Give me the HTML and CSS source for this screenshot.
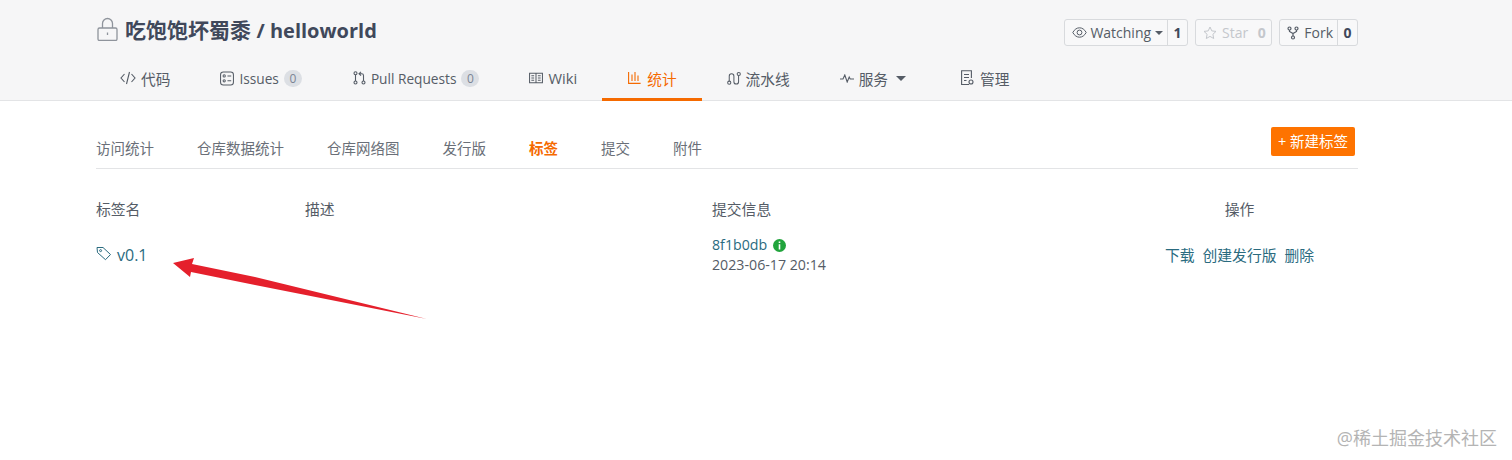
FILE: index.html
```html
<!DOCTYPE html>
<html lang="zh-CN">
<head>
    <meta charset="UTF-8">
    <meta name="viewport" content="width=device-width, initial-scale=1.0">
    <title>helloworld</title>
    <link rel="stylesheet" href="styles.css">
</head>
<body>
    <div class="header">
        <div class="container">
            <div class="title-row">
                <h1 class="repo-title">
                    <svg class="lock-icon" width="22" height="24" viewBox="0 0 22 24" fill="none" stroke="#8f949c" stroke-width="1.300">
                        <rect x="2" y="11" width="19" height="12.500" rx="1.500"/>
                        <path d="M6.500 11V6.500a5 5 0 0 1 10 0V11"/>
                        <path d="M11.500 15.500v2.500"/>
                    </svg>
                    <span>吃饱饱坏蜀黍 <span class="title-en">/ helloworld</span></span>
                </h1>
                <div class="repo-actions">
                    <div class="action-btn">
                        <span class="action-main">
                            <svg class="eye-icon" width="15" height="11" viewBox="0 0 15 11" fill="none" stroke="#555c66" stroke-width="1">
                                <path d="M.8 5.500C2.500 2.400 4.800.8 7.500.8s5 1.600 6.700 4.700c-1.700 3.100-4 4.700-6.700 4.700S2.500 8.600.8 5.500z"/>
                                <circle cx="7.500" cy="5.500" r="2.400"/>
                            </svg>
                            Watching<i class="caret"></i>
                        </span>
                        <span class="action-count">1</span>
                    </div>
                    <div class="action-btn disabled">
                        <span class="action-main">
                            <svg width="14" height="14" viewBox="0 0 14 14" fill="none" stroke="#c4c7cc" stroke-width="1">
                                <path d="M7 1l1.800 3.900 4.200.5-3.100 2.900.8 4.200L7 10.400l-3.700 2.100.8-4.200L1 5.400l4.200-.5z"/>
                            </svg>
                            Star
                        </span>
                        <span class="action-count">0</span>
                    </div>
                    <div class="action-btn">
                        <span class="action-main">
                            <svg width="12" height="14" viewBox="0 0 12 14" fill="none" stroke="#555c66" stroke-width="1.200">
                                <circle cx="2.500" cy="2.500" r="1.500"/>
                                <circle cx="9.500" cy="2.500" r="1.500"/>
                                <circle cx="6" cy="11.500" r="1.500"/>
                                <path d="M2.500 4v1.500L6 7.500l3.500-2V4M6 7.500V10"/>
                            </svg>
                            Fork
                        </span>
                        <span class="action-count">0</span>
                    </div>
                </div>
            </div>
            <div class="tabs">
                <a class="tab" href="#code">
                    <svg width="16" height="14" viewBox="0 0 16 14" fill="none" stroke="#555c66" stroke-width="1.100">
                        <path d="M4.500 3L1 7l3.500 4M11.500 3L15 7l-3.500 4M9.500 1L6.500 13"/>
                    </svg>
                    代码
                </a>
                <a class="tab" href="#issues">
                    <svg width="14" height="15" viewBox="0 0 15 15" fill="none" stroke="#555c66" stroke-width="1.100">
                        <rect x=".6" y=".6" width="13.800" height="13.800" rx="3"/>
                        <circle cx="4.500" cy="4.800" r="1.200"/>
                        <circle cx="4.500" cy="10" r="1.200"/>
                        <path d="M8 4.800h4M8 10h4"/>
                    </svg>
                    <span class="tab-en">Issues</span> <span class="tab-badge">0</span>
                </a>
                <a class="tab" href="#pulls">
                    <svg width="14" height="14" viewBox="-1 0 14 14" fill="none" stroke="#555c66" stroke-width="1.100">
                        <circle cx="2.500" cy="2.300" r="1.500"/>
                        <circle cx="2.500" cy="11.500" r="1.500"/>
                        <circle cx="10.500" cy="11.500" r="1.500"/>
                        <path d="M2.500 3.800V10M10.500 10V4.500q0-1.800-1.800-1.800H6.500M8 .8L6 2.700l2 1.900"/>
                    </svg>
                    <span class="tab-en">Pull Requests</span> <span class="tab-badge">0</span>
                </a>
                <a class="tab" href="#wiki">
                    <svg width="14" height="12" viewBox="0 0 15 12" fill="none" stroke="#555c66" stroke-width="1.100">
                        <path d="M.6 1h13.800v10H.6zM7.500 1v10M2.500 3.500h3M2.500 6h3M2.500 8.500h3M9.500 3.500h3M9.500 6h3M9.500 8.500h3"/>
                    </svg>
                    <span>Wiki</span>
                </a>
                <a class="tab active" href="#stats">
                    <svg width="15" height="12" viewBox="-1 0 15 12" fill="none" stroke="#f56a00" stroke-width="1.100">
                        <path d="M.6 0v11.400h12M4 2.500v6.500M7 0v9M10 3.500V9"/>
                    </svg>
                    统计
                </a>
                <a class="tab" href="#pipeline">
                    <svg width="14" height="15" viewBox="0 0 15 15" fill="none" stroke="#555c66" stroke-width="1.100">
                        <circle cx="2.400" cy="12" r="1.700"/>
                        <circle cx="12.600" cy="2.700" r="1.700"/>
                        <path d="M2.400 10.300V5a2.500 2.500 0 0 1 5 0v6a2.500 2.500 0 0 0 5 0V4.400"/>
                    </svg>
                    流水线
                </a>
                <a class="tab" href="#services">
                    <svg width="14" height="9" viewBox="0 0 14 9" fill="none" stroke="#555c66" stroke-width="1.100">
                        <path d="M0 5h3l1.800-4 2.400 7 2-5 1 2h4"/>
                    </svg>
                    服务<i class="caret tab-caret"></i>
                </a>
                <a class="tab" href="#manage">
                    <svg width="15" height="16" viewBox="0 0 15 16" fill="none" stroke="#555c66" stroke-width="1.100">
                        <path d="M9 14.500H1.600V.8h9.800V8M4 4.500h5M4 7.500h5M4 10.500h2.500"/>
                        <circle cx="11" cy="12" r="2"/>
                    </svg>
                    管理
                </a>
            </div>
        </div>
    </div>

    <div class="container">
        <div class="subnav">
            <div class="subnav-links">
                <a href="#visits">访问统计</a>
                <a href="#data">仓库数据统计</a>
                <a href="#network">仓库网络图</a>
                <a href="#releases">发行版</a>
                <a class="active" href="#tags">标签</a>
                <a href="#commits">提交</a>
                <a href="#attach">附件</a>
            </div>
            <a class="new-tag" href="#new">+ 新建标签</a>
        </div>

        <div class="tag-table">
            <div class="tag-head">标签名</div>
            <div class="tag-head">描述</div>
            <div class="tag-head">提交信息</div>
            <div class="tag-head center">操作</div>

            <div class="tag-name">
                <svg width="16" height="15" viewBox="0 0 16 15" fill="none" stroke="#2a6b7f" stroke-width="1" stroke-linejoin="round">
                    <path d="M1 1.500h6l7.500 7-5 5.200L1.500 6.500z"/>
                    <circle cx="4.600" cy="4.600" r="1"/>
                </svg>
                <a href="#v0.1">v0.1</a>
            </div>
            <div></div>
            <div class="tag-commit">
                <div class="commit-hash">
                    <a href="#8f1b0db">8f1b0db</a>
                    <svg width="13" height="13" viewBox="0 0 13 13">
                        <circle cx="6.500" cy="6.500" r="6.500" fill="#21a43c"/>
                        <path d="M5.700 2.500h1.600v1.600H5.700zM5.700 5.300h1.600v5.200H5.700z" fill="#fff"/>
                    </svg>
                </div>
                <div class="commit-date">2023-06-17 20:14</div>
            </div>
            <div class="tag-ops">
                <a href="#download">下载</a>
                <a href="#release">创建发行版</a>
                <a href="#delete">删除</a>
            </div>
        </div>
    </div>

    <svg class="arrow" width="270" height="70" viewBox="0 0 270 70">
        <path d="M3 13L24 8 22 14 85 27 257 69 85 35 21 22 20 27z" fill="#e5202c"/>
    </svg>

    <div class="watermark">@稀土掘金技术社区</div>
</body>
</html>
```

FILE: styles.css
```css
body {
    font-family: "Open Sans", "Noto Sans CJK SC", sans-serif;
    font-size: 14.5px;
    color: #555c66;
    background-color: #fff;
    margin: 0;
    height: 460px;
    overflow: hidden;
    position: relative;
}

a {
    color: inherit;
    text-decoration: none;
}

.container {
    width: 1262px;
    margin-left: 96px;
}

.header {
    background-color: #f6f6f7;
    border-bottom: 1px solid #e3e4e6;
    height: 101px;
    box-sizing: border-box;
}

.title-row {
    display: flex;
    justify-content: space-between;
    height: 58px;
    padding-top: 18px;
    box-sizing: border-box;
}

.repo-title {
    display: flex;
    align-items: center;
    gap: 7px;
    margin: -1px 0 0;
    height: 24px;
    font-size: 21px;
    font-weight: 700;
    color: #40485b;
}

.title-en {
    font-size: 20px;
}

.repo-actions {
    display: flex;
    gap: 7px;
    padding-top: 1px;
}

.action-btn {
    display: flex;
    height: 27px;
    box-sizing: border-box;
    border: 1px solid #d8dadd;
    border-radius: 3px;
    background-color: #f8f8f9;
    font-size: 14px;
    line-height: 25px;
}

.action-main {
    display: flex;
    align-items: center;
    gap: 5px;
    padding: 0 4px 0 7px;
}

.eye-icon {
    margin-right: -2px;
}

.action-count {
    width: 19px;
    text-align: center;
    border-left: 1px solid #d8dadd;
    font-weight: 700;
    color: #40485b;
}

.action-btn.disabled {
    color: #c4c7cc;
}

.action-btn.disabled .action-count {
    border-left: 0;
    color: #c4c7cc;
}

.caret {
    display: inline-block;
    width: 0;
    height: 0;
    margin-left: -1px;
    border-top: 4px solid #555c66;
    border-left: 4px solid transparent;
    border-right: 4px solid transparent;
}

.tabs {
    display: flex;
    height: 43px;
    margin-left: -1px;
    font-size: 14.7px;
}

.tab {
    display: flex;
    align-items: center;
    gap: 5px;
    padding: 0 25px;
    height: 43px;
    box-sizing: border-box;
    padding-bottom: 3px;
    white-space: nowrap;
}

.tab.active {
    color: #f56a00;
    border-bottom: 3px solid #f56a00;
    padding-bottom: 0;
}

.tab-en {
    font-size: 13.7px;
}

.tab-badge {
    display: inline-block;
    min-width: 18px;
    height: 17px;
    line-height: 17px;
    border-radius: 9px;
    background-color: #dcdfe4;
    color: #7b8494;
    font-size: 12px;
    text-align: center;
}

.tab-caret {
    margin: 0 4px 0 3px;
    border-top-width: 5px;
    border-left-width: 5px;
    border-right-width: 5px;
}

.subnav {
    display: flex;
    justify-content: space-between;
    align-items: center;
    height: 68px;
    padding-top: 22px;
    padding-right: 3px;
    box-sizing: border-box;
    border-bottom: 1px solid #e3e4e6;
}

.subnav-links {
    display: flex;
    gap: 43px;
    padding-top: 4px;
    color: #6a6f78;
}

.subnav-links a.active {
    color: #f56a00;
    font-weight: 700;
}

.new-tag {
    background-color: #fe7300;
    color: #fff;
    border-radius: 2px;
    height: 29px;
    line-height: 29px;
    padding: 0 7px;
    margin-top: -8px;
}

.tag-table {
    display: grid;
    grid-template-columns: 209px 407px 409px 237px;
    grid-template-rows: 62px 48px;
    align-items: center;
}

.tag-head {
    padding-top: 30px;
    height: 62px;
    box-sizing: border-box;
    font-size: 14.8px;
    line-height: 21px;
}

.center {
    text-align: center;
}

.tag-name {
    display: flex;
    align-items: center;
    gap: 5px;
    color: #2a6b7f;
    font-size: 16px;
    line-height: 24px;
}

.tag-name svg {
    margin-top: -3px;
}

.tag-commit {
    font-size: 14.2px;
    line-height: 20px;
}

.commit-hash {
    display: flex;
    align-items: center;
    gap: 6px;
    color: #2a6b7f;
}

.tag-ops {
    display: flex;
    justify-content: center;
    gap: 8px;
    margin-top: -1px;
    font-size: 14.8px;
    color: #2a6b7f;
    line-height: 24px;
}

/* annotation drawn over the screenshot */
.arrow {
    position: absolute;
    left: 170px;
    top: 250px;
}

.watermark {
    position: absolute;
    right: 15px;
    top: 424px;
    font-size: 18px;
    color: #b4b4b4;
}
```
